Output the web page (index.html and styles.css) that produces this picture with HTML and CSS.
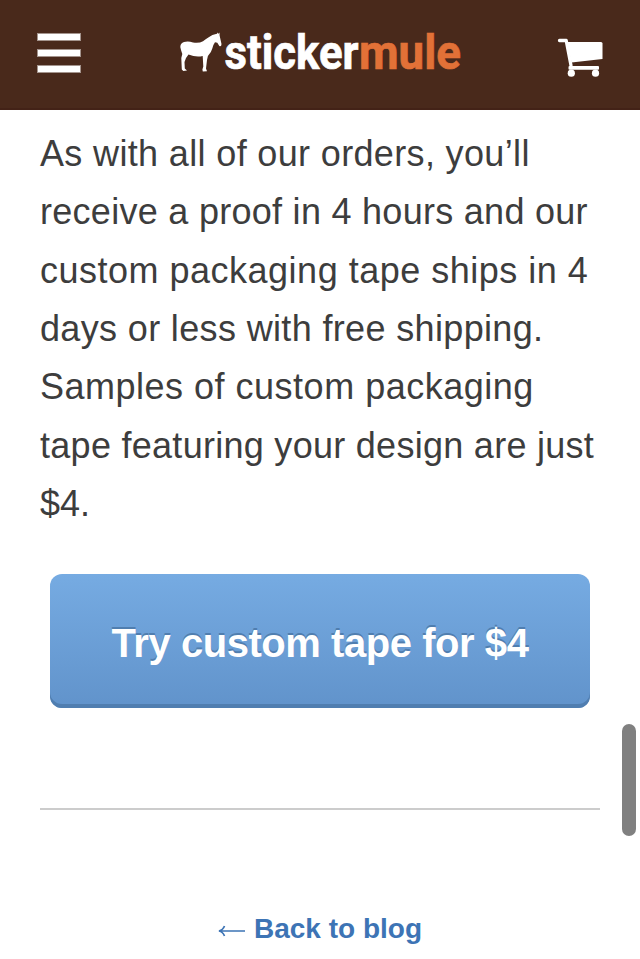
FILE: index.html
```html
<!DOCTYPE html>
<html lang="en">
<head>
<meta charset="utf-8">
<title>Sticker Mule</title>
<link rel="stylesheet" href="styles.css">
</head>
<body>
<header class="header">
  <div class="menu"><i></i><i></i><i></i></div>
  <svg class="logo" width="286" height="60" viewBox="178 20 286 60">
    <path fill="#fff" d="M180.300 47Q180.500 43 184 42.100Q188 40.900 193 42.500Q199 43.500 203 41.300C207 38.500 211 35 216 34.100L217.200 33.800L217 32.500L218.500 33.700L219.500 32.500L219.600 35.500L221.500 44Q221.400 47 219.300 46L217.300 42.800L215 42.300Q213 45 212.300 48.500Q211.300 52.500 207.900 56L207 60L206 68.500L207 71.200L202.800 71.600L202.400 69.500L203.300 66.500L202.700 56Q196 57.500 188.500 54.600L186 58L184.500 62L184.800 68.500L187 70.500L183.300 71L181.800 69.500L181.300 58L182.300 54Q180.800 50 180.300 47Z"/>
    <text class="logo-a" x="224.500" y="69" textLength="134" lengthAdjust="spacingAndGlyphs">sticker</text>
    <text class="logo-b" x="359" y="69" textLength="102" lengthAdjust="spacingAndGlyphs">mule</text>
  </svg>
  <svg class="cart" width="48" height="42" viewBox="556 37 48 42">
    <path fill="none" stroke="#fff" stroke-width="3.300" stroke-linecap="round" stroke-linejoin="round" d="M559.500 40.500H566.200L571 65.500"/>
    <path fill="#fff" d="M567 42H601Q602.500 42 602.500 43.500V59L571.500 62.500Z"/>
    <rect x="568.500" y="66" width="30.500" height="3.700" rx="1" fill="#fff"/>
    <circle cx="571.300" cy="73.200" r="3.600" fill="#fff"/><circle cx="595.500" cy="73.200" r="3.600" fill="#fff"/>
  </svg>
</header>
<main class="content">
  <p class="copy"><span class="s1">As with all of our orders, you’ll</span><br><span class="s2">receive a proof in 4 hours and our</span><br><span class="s3">custom packaging tape ships in 4</span><br><span class="s1">days or less with free shipping.</span><br><span class="s3">Samples of custom packaging</span><br><span class="s2">tape featuring your design are just</span><br>$4.</p>
  <a class="button">Try custom tape for $4</a>
  <hr class="rule">
  <a class="back"><svg width="28" height="18" viewBox="0 0 28 18"><path fill="none" stroke="currentColor" stroke-width="1.700" d="M27 9H2M6.500 4Q5 8 1 9Q5 10 6.500 14"/></svg><span>Back to blog</span></a>
</main>
<div class="scrollbar"></div>
</body>
</html>
```
FILE: styles.css
```css
* { box-sizing: border-box; }
body { margin: 0; height: 959px; overflow: hidden; background: #fff; font-family: "Liberation Sans", Arial, sans-serif; }
.header { height: 110px; background: #49291b; border-bottom: 2px solid #432217; display: flex; align-items: flex-start; justify-content: space-between; padding: 20px 36px 0 37px; }
.menu { width: 44px; margin-top: 13px; display: grid; gap: 8px; }
.menu i { height: 8px; background: #fff; border: 1px solid #a4948d; }
.logo { margin-left: 4px; overflow: visible; }
.cart { margin-top: 17px; }
.logo-a, .logo-b { font: 700 48px Roboto, sans-serif; stroke-width: .7px; }
.logo-a { fill: #fff; stroke: #fff; }
.logo-b { fill: #e27137; stroke: #e27137; }
.content { padding: 15px 40px 0; display: flex; flex-direction: column; }
.copy { margin: 0; font-size: 36px; line-height: 58.33px; color: #3d3d3d; white-space: nowrap; }
.s1 { letter-spacing: .35px; }
.s2 { letter-spacing: .28px; }
.s3 { letter-spacing: .5px; }
.button { height: 134px; margin: 41px 10px 0; border-radius: 12px; background: linear-gradient(#76abe2, #6193cb); box-shadow: inset 0 -4px #507eb0; color: #fff; font-size: 40px; font-weight: 700; letter-spacing: -.45px; line-height: 138px; text-align: center; text-shadow: 0 -2px #507eaf; white-space: nowrap; }
.rule { width: 100%; height: 2px; margin: 100px 0 0; border: 0; background: #ccc; }
.back { display: flex; align-items: center; justify-content: center; gap: 8px; margin-top: 103px; color: #3d74b5; font-size: 28px; line-height: 32px; font-weight: 700; }
.back svg { margin-top: 4px; }
.scrollbar { position: absolute; left: 622px; top: 724px; width: 14px; height: 112px; border-radius: 7px; background: #808080; }
```
